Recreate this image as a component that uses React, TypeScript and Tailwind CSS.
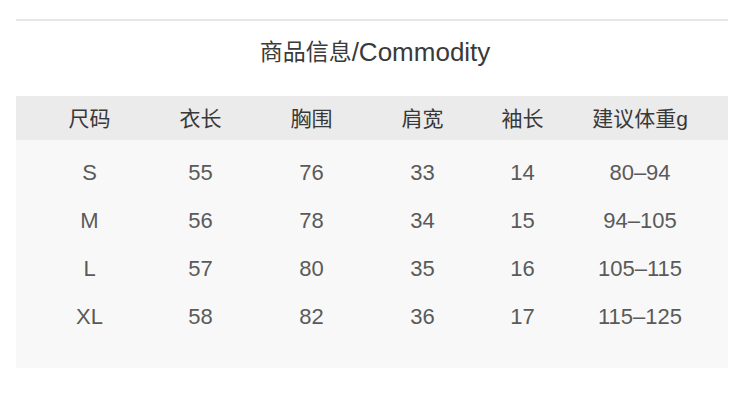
const headers = ["尺码", "衣长", "胸围", "肩宽", "袖长", "建议体重g"];

const rows = [
  ["S", "55", "76", "33", "14", "80–94"],
  ["M", "56", "78", "34", "15", "94–105"],
  ["L", "57", "80", "35", "16", "105–115"],
  ["XL", "58", "82", "36", "17", "115–125"],
];

const cols = "grid grid-cols-[111px_111px_111px_111px_89px_146px] pl-[18px]";

export default function App() {
  return (
    <div className="h-[419px] w-[750px] bg-white pt-[19px] font-['Liberation_Sans','Noto_Sans_CJK_SC',sans-serif]">
      <div className="ml-4 h-[2px] w-[712px] bg-[#e6e6e6]" />

      <div className="flex h-[62px] items-center justify-center text-[#3a3a3a]">
        <span className="text-[23px] leading-none">商品信息</span>
        <span className="text-[26px] leading-none">/Commodity</span>
      </div>

      <div className="ml-4 w-[712px] mt-[13px]">
        <div className={`${cols} h-[44px] items-center bg-[#ebebeb] text-[21px] text-[#383838]`}>
          {headers.map((h) => (
            <div key={h} className="text-center leading-none">
              {h}
            </div>
          ))}
        </div>

        <div className="h-[228px] bg-[#f8f8f8] pt-[9px]">
          {rows.map((row) => (
            <div key={row[0]} className={`${cols} h-12 items-center text-[22px] text-[#5a5a5a]`}>
              {row.map((cell, i) => (
                <div key={i} className="text-center leading-none">
                  {cell}
                </div>
              ))}
            </div>
          ))}
        </div>
      </div>
    </div>
  );
}
